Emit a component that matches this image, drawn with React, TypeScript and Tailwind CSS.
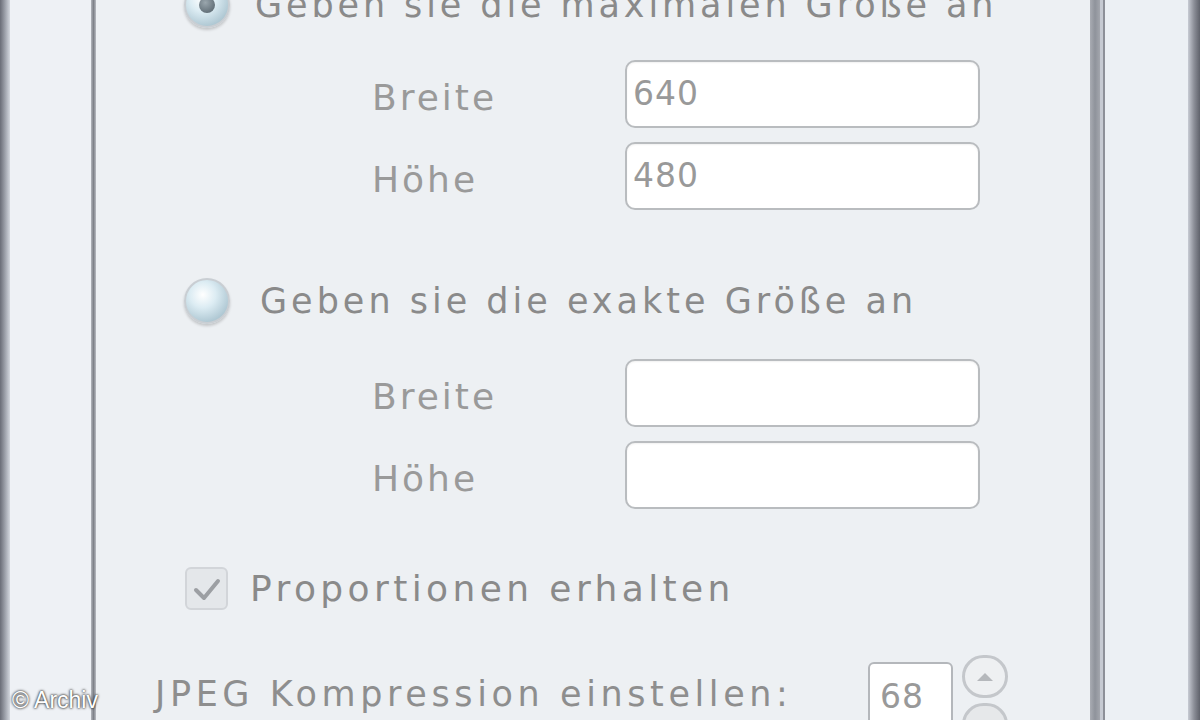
import React from "react";

const font = { fontFamily: '"DejaVu Sans", "Liberation Sans", sans-serif' };

const Radio = ({ checked }: { checked?: boolean }) => (
    <div className="w-[46px] h-[46px] rounded-full border-2 border-[#c9ced3] bg-[radial-gradient(circle_at_40%_35%,#ffffff_0%,#dcecf3_35%,#a9c3cf_80%,#8fa9b5_100%)] shadow-[0_2px_3px_rgba(0,0,0,0.18)] flex items-center justify-center shrink-0">
        {checked && <div className="w-[16px] h-[16px] rounded-full bg-[radial-gradient(circle_at_40%_35%,#9aa6ad,#4f5d66)]" />}
    </div>
);

const Field = ({ label, value }: { label: string; value?: string }) => (
    <div className="flex items-center h-[68px]">
        <div className="w-[253px] pl-[276px] pt-[8px] box-content text-[36px] tracking-[3px] text-[#9a9a9a] leading-none">{label}</div>
        <div className="w-[355px] h-[68px] rounded-[10px] border-2 border-[#b9bcbf] bg-white shadow-[inset_0_1px_2px_rgba(0,0,0,0.06)] flex items-center pl-[6px] text-[33px] tracking-[1px] text-[#999999]">
            {value}
        </div>
    </div>
);

export default function App() {
    return (
        <div className="w-[1200px] h-[720px] overflow-hidden flex bg-[#eef1f5] relative" style={font}>
            {/* left frame */}
            <div className="w-[10px] bg-gradient-to-r from-[#6a6d77] via-[#9da1aa] to-[#d4d8df]" />
            <div className="w-[81px] bg-[#eef1f5]" />
            <div className="w-[5px] bg-gradient-to-r from-[#b3b6bc] via-[#7f8289] to-[#b9bcc2]" />

            {/* main panel */}
            <div className="w-[994px] bg-[#edf0f3] flex flex-col">
                <div className="flex items-center mt-[-18px] h-[46px] pl-[88px]">
                    <Radio checked />
                    <span className="ml-[25px] text-[35px] tracking-[3.9px] text-[#8a8a8a] leading-none">
                        Geben sie die maximalen Größe an
                    </span>
                </div>

                <div className="flex flex-col gap-[14px] mt-[32px]">
                    <Field label="Breite" value="640" />
                    <Field label="Höhe" value="480" />
                </div>

                <div className="flex items-center mt-[68px] h-[47px] pl-[88px]">
                    <Radio />
                    <span className="ml-[30px] text-[35px] tracking-[4px] text-[#8a8a8a] leading-none">
                        Geben sie die exakte Größe an
                    </span>
                </div>

                <div className="flex flex-col gap-[14px] mt-[35px]">
                    <Field label="Breite" />
                    <Field label="Höhe" />
                </div>

                <div className="flex items-center mt-[58px] h-[43px] pl-[89px]">
                    <div className="w-[43px] h-[43px] rounded-[6px] border-2 border-[#d2d5d9] bg-[#e4e7ea] flex items-center justify-center shrink-0">
                        <svg width="34" height="34" viewBox="0 0 34 34" fill="none">
                            <path d="M6 18 L14 26 L28 9" stroke="#9c9fa3" strokeWidth="4" strokeLinecap="round" strokeLinejoin="round" />
                        </svg>
                    </div>
                    <span className="ml-[22px] text-[36px] tracking-[4.4px] text-[#8a8a8a] leading-none">
                        Proportionen erhalten
                    </span>
                </div>

                <div className="flex items-start mt-[45px] pl-[59px]">
                    <span className="mt-[22px] text-[35px] tracking-[4.6px] text-[#8e8e8e] leading-none w-[713px] whitespace-nowrap">
                        JPEG Kompression einstellen:
                    </span>
                    <div className="mt-[7px] w-[85px] h-[70px] rounded-[6px] border-2 border-[#b4b7bb] bg-white flex items-center pl-[10px] text-[33px] tracking-[1px] text-[#999999]">
                        68
                    </div>
                    <div className="ml-[9px] flex flex-col gap-[5px]">
                        <div className="w-[46px] h-[43px] rounded-full border-[3px] border-[#c4c7cb] bg-[#eef0f2] flex items-center justify-center">
                            <svg width="20" height="12" viewBox="0 0 20 12">
                                <path d="M2 10 L10 2 L18 10 Z" fill="#b5b8bc" />
                            </svg>
                        </div>
                        <div className="w-[46px] h-[43px] rounded-full border-[3px] border-[#c4c7cb] bg-[#e6e8ea]" />
                    </div>
                </div>
            </div>

            {/* right frame */}
            <div className="w-[10px] bg-gradient-to-r from-[#a9acb3] via-[#8f939b] to-[#a3a6ad]" />
            <div className="w-[3px] bg-[#c6cad2]" />
            <div className="w-[2px] bg-[#8d9098]" />
            <div className="w-[83px] bg-[#ecf0f4]" />
            <div className="w-[12px] bg-gradient-to-r from-[#c8ccd4] via-[#8c8f98] to-[#5f626b]" />

            <div className="absolute left-[12px] top-[683px] text-[23px] text-white [text-shadow:0_0_2px_#333,0_0_3px_#333]" style={{ fontFamily: '"Liberation Sans", Arial, sans-serif' }}>
                © Archiv
            </div>
        </div>
    );
}
